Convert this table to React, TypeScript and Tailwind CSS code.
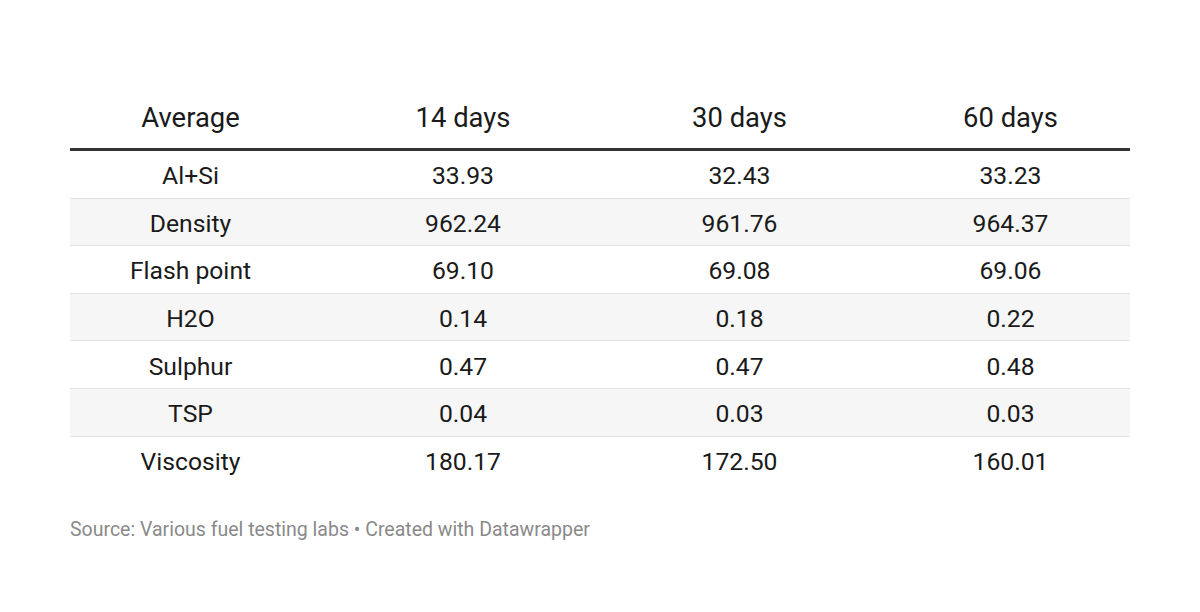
const rows = [
  ["Al+Si", "33.93", "32.43", "33.23"],
  ["Density", "962.24", "961.76", "964.37"],
  ["Flash point", "69.10", "69.08", "69.06"],
  ["H2O", "0.14", "0.18", "0.22"],
  ["Sulphur", "0.47", "0.47", "0.48"],
  ["TSP", "0.04", "0.03", "0.03"],
  ["Viscosity", "180.17", "172.50", "160.01"],
];

const cols = "grid grid-cols-[241px_304px_249px_266px]";

export default function App() {
  return (
    <div
      className="w-[1200px] h-[612px] bg-white text-[#1a1a1a] pt-[94px] px-[70px]"
      style={{ fontFamily: "Roboto, 'Liberation Sans', sans-serif" }}
    >
      <div className={`${cols} h-[57px] border-b-[3px] border-[#333333] text-[27.4px] leading-[48px]`}>
        <div className="text-center">Average</div>
        <div className="text-center">14 days</div>
        <div className="text-center">30 days</div>
        <div className="text-center pl-[27px]">60 days</div>
      </div>
      {rows.map((r, i) => (
        <div
          key={r[0]}
          className={`${cols} h-[47.6px] items-center pt-[3px] text-[24.7px] ${
            i % 2 === 1 ? "bg-[#f6f6f6]" : "bg-white"
          } ${i < rows.length - 1 ? "border-b border-[#e2e2e2]" : ""}`}
        >
          <div className="text-center">{r[0]}</div>
          <div className="text-center">{r[1]}</div>
          <div className="text-center">{r[2]}</div>
          <div className="text-center pl-[27px]">{r[3]}</div>
        </div>
      ))}
      <p className="mt-[33px] text-[19.5px] leading-[26px] text-[#8a8a8a]">
        Source: Various fuel testing labs • Created with Datawrapper
      </p>
    </div>
  );
}
